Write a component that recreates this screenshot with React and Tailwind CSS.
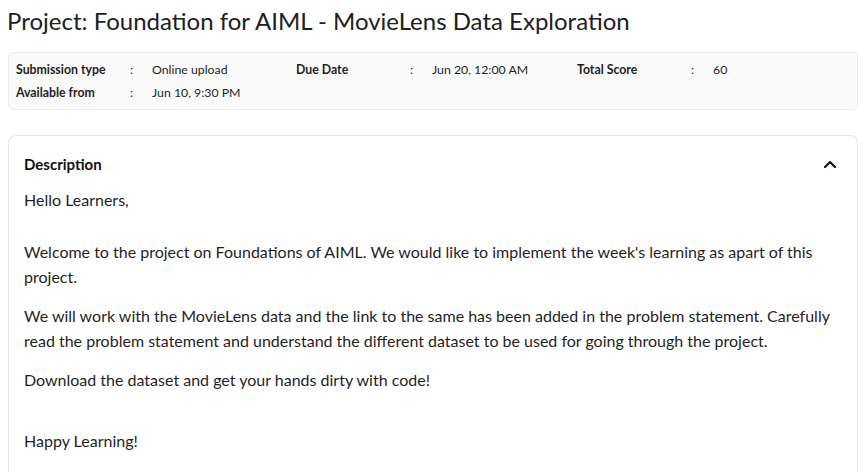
function Meta({ label, value }) {
  return (
    <div className="flex">
      <div className="w-[114px] font-bold">{label}</div>
      <div className="w-[22px]">:</div>
      <div>{value}</div>
    </div>
  );
}

export default function App() {
  return (
    <div className="min-h-[472px] bg-white text-[#1f1f1f]" style={{ fontFamily: 'Lato, "Noto Sans", sans-serif' }}>
      <h1 className="px-[7px] pt-[4px] text-[24px] leading-[34px] text-[#202020]">
        Project: Foundation for AIML - MovieLens Data Exploration
      </h1>
      <div className="mx-[8px] mt-[14px] rounded-[5px] border border-[#ebebeb] bg-[#fafafa] pl-[7px] pr-[8px] pt-[5px] pb-[5px] text-[12.3px] leading-[23px]">
        <div className="grid grid-cols-[280px_281px_1fr]">
          <Meta label="Submission type" value="Online upload" />
          <Meta label="Due Date" value="Jun 20, 12:00 AM" />
          <Meta label="Total Score" value="60" />
          <Meta label="Available from" value="Jun 10, 9:30 PM" />
        </div>
      </div>
      <div className="mx-[8px] mt-[25px] rounded-t-[8px] border border-b-0 border-[#e6e6e6] px-[15px] pb-[20px]">
        <div className="flex items-center justify-between pt-[17px] leading-[22px]">
          <div className="text-[15px] font-bold text-[#111]">Description</div>
          <svg width="14" height="10" viewBox="0 0 14 10" className="mr-[5px]">
            <polyline points="2,8 7,3 12,8" fill="none" stroke="#111" strokeWidth="2.2" strokeLinecap="round" strokeLinejoin="round" />
          </svg>
        </div>
        <div className="mt-[12px] text-[16px] leading-[25px]">
          <p className="mb-[27px]">Hello Learners,</p>
          <p className="mb-[14px]">
            Welcome to the project on Foundations of AIML. We would like to implement the week's learning as apart of this project.
          </p>
          <p className="mb-[14px]">
            We will work with the MovieLens data and the link to the same has been added in the problem statement. Carefully read the problem statement and understand the different dataset to be used for going through the project.
          </p>
          <p className="mb-[36px]">Download the dataset and get your hands dirty with code!</p>
          <p>Happy Learning!</p>
        </div>
      </div>
    </div>
  );
}
